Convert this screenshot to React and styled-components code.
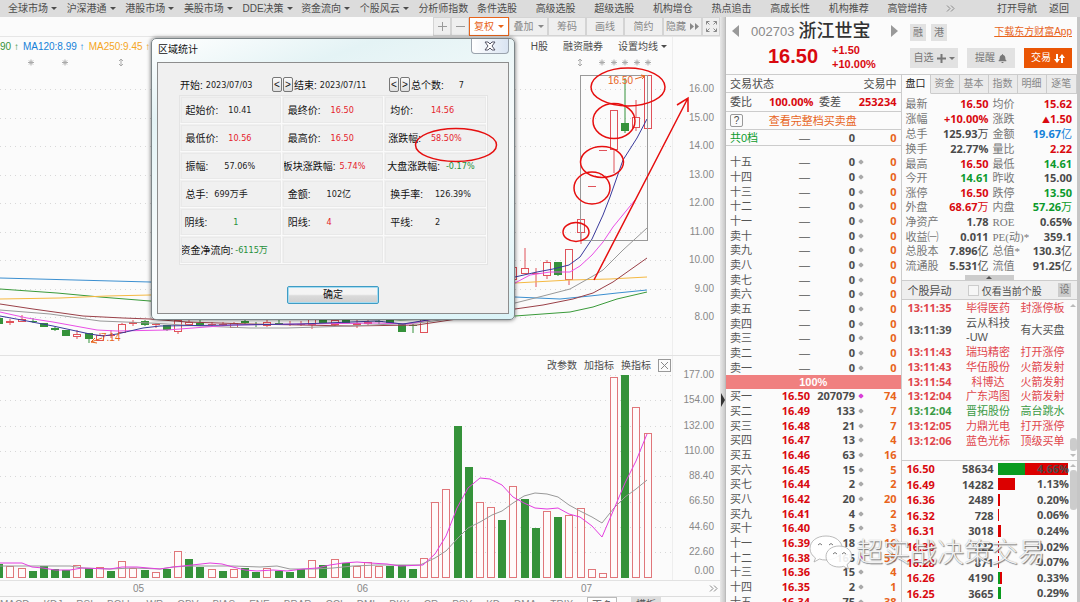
import React from "react";
import styled, { createGlobalStyle } from "styled-components";
import { FaBell } from "react-icons/fa";

const RED = "#d9090f";
const GREEN = "#0c9a2c";
const DARK = "#4a4a4a";
const ORANGE = "#e8641b";
const BLUE = "#1481d8";

const menus = [
  ["全球市场", true],
  ["沪深港通", true],
  ["港股市场", true],
  ["美股市场", true],
  ["DDE决策", true],
  ["资金流向", true],
  ["个股风云", true],
  ["分析师指数"],
  ["条件选股"],
  ["高级选股"],
  ["超级选股"],
  ["机构增仓"],
  ["热点追击"],
  ["高成长性"],
  ["机构推荐"],
  ["高管增持"],
];

// each cell of the dialog: [label, value, color, indent, gap]
const stats = [
  ["起始价:", "10.41", "#222", 6, 10],
  ["最终价:", "16.50", "#e5232c", 6, 10],
  ["均价:", "14.56", "#e5232c", 6, 18],
  ["最低价:", "10.56", "#e5232c", 6, 10],
  ["最高价:", "16.50", "#e5232c", 6, 10],
  ["涨跌幅:", "58.50%", "#e5232c", 4, 10],
  ["振幅:", "57.06%", "#222", 6, 16],
  ["板块涨跌幅:", "5.74%", "#e5232c", 1, 4],
  ["大盘涨跌幅:", "-0.17%", "#1f8f3a", 3, 6],
  ["总手:", "699万手", "#222", 6, 6],
  ["金额:", "102亿", "#222", 6, 16],
  ["换手率:", "126.39%", "#222", 6, 12],
  ["阴线:", "1", "#1f8f3a", 5, 26],
  ["阳线:", "4", "#e5232c", 6, 16],
  ["平线:", "2", "#222", 6, 22],
  ["资金净流向:", "-6115万", "#1f8f3a", 1, 2],
  ["", ""],
  ["", ""],
];

const priceTicks = [16, 15, 14, 13, 12, 11, 10, 9, 8];
const volumeTicks = [
  "177.00",
  "154.00",
  "132.00",
  "110.00",
  "88.40",
  "66.50",
  "44.60",
  "22.60",
];

const indicators =
  "MACD KDJ RSI BOLL WR OBV BIAS ENE BRAR CCI DMI DKX CR PSY KD DMA TRIX".split(
    " "
  );

const sells = [
  "十五",
  "十四",
  "十三",
  "十二",
  "十一",
  "卖十",
  "卖九",
  "卖八",
  "卖七",
  "卖六",
  "卖五",
  "卖四",
  "卖三",
  "卖二",
  "卖一",
];

const buys = [
  ["买一", "16.50", "207079", "74"],
  ["买二", "16.49", "133", "7"],
  ["买三", "16.48", "21", "7"],
  ["买四", "16.47", "13", "4"],
  ["买五", "16.46", "63", "16"],
  ["买六", "16.45", "15", "5"],
  ["买七", "16.44", "2", "2"],
  ["买八", "16.42", "20", "20"],
  ["买九", "16.41", "4", "2"],
  ["买十", "16.40", "5", "3"],
  ["十一", "16.39", "18", "16"],
  ["十二", "16.38", "165", "55"],
  ["十三", "16.36", "15", "4"],
  ["十四", "16.35", "2", "1"],
  ["十五", "16.34", "75", "38"],
];

const quotes = [
  ["最新", "16.50", RED, "均价", "15.62", RED],
  ["涨幅", "+10.00%", RED, "涨跌", "▲1.50", RED],
  ["总手", "125.93万", DARK, "金额", "19.67亿", BLUE],
  ["换手", "22.77%", DARK, "量比", "2.22", RED],
  ["最高", "16.50", RED, "最低", "14.61", GREEN],
  ["今开", "14.61", GREEN, "昨收", "15.00", DARK],
  ["涨停", "16.50", RED, "跌停", "13.50", GREEN],
  ["外盘", "68.67万", RED, "内盘", "57.26万", GREEN],
  ["净资产", "1.78", DARK, "ROE", "0.65%", DARK],
  ["收益㈠", "0.011", DARK, "PE(动)*", "359.1", DARK],
  ["总股本", "7.896亿", DARK, "总值*", "130.3亿", DARK],
  ["流通股", "5.531亿", DARK, "流值", "91.25亿", DARK],
];

const alerts = [
  ["13:11:35", "毕得医药", "封涨停板", "#e0454b"],
  ["13:11:39", "云从科技\n-UW", "有大买盘", "#555"],
  ["13:11:43", "瑞玛精密", "打开涨停", "#e0454b"],
  ["13:11:43", "华伍股份", "火箭发射", "#e0454b"],
  ["13:11:54", "科博达", "火箭发射", "#e0454b"],
  ["13:12:04", "广东鸿图", "火箭发射", "#e0454b"],
  ["13:12:04", "晋拓股份", "高台跳水", "#3a9a45"],
  ["13:12:05", "力鼎光电", "打开涨停", "#e0454b"],
  ["13:12:06", "蓝色光标", "顶级买单", "#e0454b"],
];

// [price, volume, green width, red width, percent]
const deals = [
  ["16.50", "58634", 27, 43, "4.66%"],
  ["16.49", "14282", 0, 17, "1.13%"],
  ["16.36", "2489", 0, 2, "0.20%"],
  ["16.32", "728", 0, 1, "0.06%"],
  ["16.31", "3018", 0, 3, "0.24%"],
  ["16.30", "222", 0, 1, "0.02%"],
  ["16.28", "871", 0, 1, "0.07%"],
  ["16.26", "4190", 2, 2, "0.33%"],
  ["16.25", "3665", 3, 0, "0.29%"],
];

// volume bars, one per trading day: direction and height
const volumes =
  "G14 R12 R10 G7 G12 G9 G8 R13 G10 R11 G7 R17 R10 G8 R6 G9 R27 G19 G11 R9 G7 R9 G10 G6 R10 G7 G6 G9 R18 G13 R19 G15 R12 R16 R12 G12 G13 G9 R20 R76 R89 G152 G111 R76 R71 G58 R92 G79 G50 R67 G61 R63 R70 R9 R5 R201 G203 R171 R145".split(
    " "
  );

// [day, direction, body top, body bottom, high, low]
const candles = [
  [0, "G", 318, 324, 318, 324],
  [1, "R", 321, 323, 319, 325],
  [2, "R", 319, 322, 315, 322],
  [3, "G", 321, 322, 318, 323],
  [4, "G", 323, 327, 323, 327],
  [5, "G", 328, 330, 327, 331],
  [6, "G", 330, 336, 330, 336],
  [7, "R", 334, 337, 330, 339],
  [8, "G", 333, 339, 333, 343],
  [9, "R", 335, 341, 333, 341],
  [10, "R", 335, 336, 330, 338],
  [11, "R", 324, 333, 323, 333],
  [12, "R", 322, 324, 320, 326],
  [13, "G", 321, 325, 320, 326],
  [14, "R", 324, 325, 323, 328],
  [15, "G", 325, 330, 325, 331],
  [16, "R", 320, 332, 318, 334],
  [17, "R", 322, 325, 320, 325],
  [18, "G", 323, 325, 320, 326],
  [19, "R", 324, 325, 322, 326],
  [20, "R", 324, 325, 322, 326],
  [21, "R", 323, 328, 322, 328],
  [22, "G", 321, 323, 318, 324],
  [23, "G", 324, 325, 322, 327],
  [24, "R", 322, 326, 320, 327],
  [25, "G", 323, 324, 319, 325],
  [26, "R", 324, 325, 321, 326],
  [27, "R", 324, 325, 321, 326],
  [28, "R", 319, 325, 318, 329],
  [29, "G", 318, 323, 317, 323],
  [30, "R", 320, 325, 319, 326],
  [31, "G", 317, 323, 316, 323],
  [32, "R", 323, 325, 320, 328],
  [33, "R", 322, 324, 320, 326],
  [34, "G", 321, 322, 319, 324],
  [35, "G", 318, 323, 317, 324],
  [36, "G", 324, 332, 324, 332],
  [37, "G", 325, 326, 324, 333],
  [38, "R", 318, 333, 318, 333],
  [46, "R", 267, 280, 267, 280],
  [47, "R", 268, 274, 248, 274],
  [48, "R", 273, 274, 268, 287],
  [49, "R", 262, 276, 260, 279],
  [50, "G", 262, 275, 262, 276],
  [51, "R", 249, 280, 249, 285],
  [52, "R", 219, 233, 219, 244],
  [53, "R", 186, 187, 186, 187],
  [54, "R", 150, 151, 150, 151],
  [55, "R", 110, 150, 110, 173],
  [56, "G", 123, 131, 78, 133],
  [57, "R", 117, 128, 100, 131],
  [58, "R", 75, 129, 75, 129],
];

const averages = [
  ["#3b8fd0", "0,278 150,282 515,297 560,299 590,296 617,293 647,290"],
  ["#3a9a3a", "0,289 57,293 100,297 150,301 400,320 515,316 570,312 593,307 617,299 647,292"],
  ["#f5b942", "0,299 60,298 107,296 150,295 515,283 570,280 610,279 647,277"],
  ["#9a4048", "0,304 33,309 83,316 123,318 150,319 187,322 250,324 350,326 417,325 457,319 515,309 543,305 573,299 593,293 613,282 647,258"],
  ["#999", "0,310 50,314 100,321 150,323 200,326 250,328 287,328 350,326 417,323 457,318 515,303 543,296 570,289 593,276 603,270 623,250 647,228"],
  ["#ea4fe6", "0,312 27,318 53,322 97,330 117,331 167,330 193,328 233,325 300,324 377,323 407,324 440,318 515,283 530,275 550,272 570,272 580,266 592,255 603,242 613,227 635,200"],
  ["#3a3a9c", "0,316 27,321 53,326 90,334 103,336 117,334 143,328 160,326 233,325 300,324 377,321 403,324 440,318 515,277 537,272 553,269 569,265 580,257 592,239 603,215 610,197 623,160 637,138 647,119"],
];

const magentaVolume =
  "0,562 22,562 32,566 43,567 55,569 70,569 82,567 110,568 122,566 137,566 160,568 173,566 192,564 210,562 222,563 233,566 245,569 257,570 273,569 287,570 303,568 317,567 330,564 343,562 357,561 370,562 387,563 400,565 423,564 435,553 446,535 457,507 468,487 480,477 490,478 502,484 513,496 524,502 535,507 547,508 558,507 569,513 580,516 592,525 602,536 614,508 625,482 636,460 647,433";
const grayVolume =
  "0,565 70,565 83,567 110,568 133,567 160,568 173,566 190,565 233,565 260,566 277,565 290,568 313,568 333,567 353,565 377,564 420,564 435,557 446,550 457,538 468,527 480,521 492,514 502,510 513,502 524,495 535,492 547,493 558,496 569,504 580,510 592,516 602,522 614,507 625,496 636,488 647,479";

const dayX = (i) => 647.6 - (58 - i) * 11.18;

const Candle = ({ data: [day, dir, top, bottom, high, low] }) => {
  const x = Math.round(dayX(day));
  const color = dir === "R" ? "#e0525a" : "#35923a";
  return (
    <g stroke={color} fill={dir === "R" ? "#fbfbfb" : color}>
      {high < top && <path d={`M${x} ${high}V${top}`} />}
      {low > bottom && <path d={`M${x} ${bottom}V${low}`} />}
      {bottom - top < 2 ? (
        <path d={`M${x - 4} ${top}.5h8`} />
      ) : (
        <rect x={x - 3.5} y={top + 0.5} width="7" height={bottom - top - 1} />
      )}
    </g>
  );
};

const PriceChart = () => (
  <Plot viewBox="0 56 672 299" height="299" preserveAspectRatio="xMaxYMin slice">
    {priceTicks.map((tick, i) => (
      <path
        key={tick}
        d={`M0 ${Math.round(89 + i * 28.5)}.5H672`}
        stroke="#d8d8d8"
        strokeDasharray="1 4"
      />
    ))}
    <g stroke="#aaa">
      {[31, 65, 602, 614, 625, 637, 648].map((x) => (
        <path
          key={x}
          d={`M${x - 3} 62.5h6M${x} 59.5v6M${x - 2} 60.5l4 4M${x + 2} 60.5l-4 4`}
        />
      ))}
      {[121, 580].map((x) => (
        <path
          key={x}
          d={`M${x} 59v7M${x - 2} 61l2 -2l2 2M${x - 2} 64l2 2l2 -2`}
          fill="none"
        />
      ))}
    </g>
    {candles.map((candle) => (
      <Candle key={candle[0]} data={candle} />
    ))}
    {averages.map(([color, points]) => (
      <polyline key={color} points={points} fill="none" stroke={color} />
    ))}
    <rect x="580.5" y="75.5" width="67" height="165" fill="none" stroke="#999" />
    <text x="608" y="84" fontSize="10" fill={ORANGE}>
      16.50
    </text>
    <path d="M635 79l10 -3M641 75l4 1l-3 3" stroke={ORANGE} fill="none" />
    <text x="101" y="341" fontSize="10" fill={ORANGE}>
      7.14
    </text>
    <path d="M102 338L91 342M95 338l-4 4l6 1" stroke={ORANGE} fill="none" />
  </Plot>
);

const VolumeChart = () => (
  <Plot viewBox="0 374 672 205" height="205" preserveAspectRatio="xMaxYMin slice">
    {volumeTicks.map((tick, i) => (
      <path
        key={tick}
        d={`M0 ${Math.round(374 + i * 25.3)}.5H672`}
        stroke="#d8d8d8"
        strokeDasharray="1 4"
      />
    ))}
    {volumes.map((item, i) => {
      const up = item[0] === "R";
      const height = Number(item.slice(1));
      return (
        <rect
          key={i}
          x={Math.round(dayX(i)) - 3.5}
          y={577.5 - height}
          width="7"
          height={height - 1}
          fill={up ? "#fffafa" : "#35923a"}
          stroke={up ? "#e0767a" : "#35923a"}
        />
      );
    })}
    <polyline points={grayVolume} fill="none" stroke="#999" />
    <polyline points={magentaVolume} fill="none" stroke="#e33fe0" />
  </Plot>
);

const StatsDialog = () => (
  <Dialog role="dialog" aria-label="区域统计">
    <DialogTitle>
      <span>区域统计</span>
      <CloseButton aria-label="关闭">
        <svg width="12" height="10" viewBox="0 0 12 10">
          <path
            d="M1 1h3l2 2l2 -2h3l-3 4l3 4h-3l-2 -2l-2 2h-3l3 -4z"
            fill="#fff"
            stroke="#556"
          />
        </svg>
      </CloseButton>
    </DialogTitle>
    <DialogBody>
      <RangeRow>
        <RangePart $width={114}>
          开始: <Value>2023/07/03</Value>
          <Steps>
            <StepButton>&lt;</StepButton>
            <StepButton>&gt;</StepButton>
          </Steps>
        </RangePart>
        <RangePart $width={117}>
          结束: <Value>2023/07/11</Value>
          <Steps>
            <StepButton>&lt;</StepButton>
            <StepButton>&gt;</StepButton>
          </Steps>
        </RangePart>
        <RangePart $width={54}>
          总个数: <Count>7</Count>
        </RangePart>
      </RangeRow>
      <StatGrid>
        {stats.map(([label, value, color, indent, gap], i) => (
          <StatCell key={i} $indent={indent} $gap={gap}>
            <span>{label}</span>
            <Value $color={color}>{value}</Value>
          </StatCell>
        ))}
      </StatGrid>
      <ConfirmButton>确定</ConfirmButton>
    </DialogBody>
  </Dialog>
);

const MoreArrows = ({ label }) => (
  <MoreButton aria-label={label}>
    <svg width="9" height="7" fill="none" stroke="#888">
      <path d="M1 .5l3 3l-3 3M5 .5l3 3l-3 3" />
    </svg>
  </MoreButton>
);

const ChartPanel = () => (
  <Chart>
    <ChartMain>
      <Toolbar>
        <Tool $width={18}>
          <svg width="11" height="11" stroke="#999">
            <path d="M5.5 1v9M1 5.5h9" />
          </svg>
        </Tool>
        <Tool $width={18}>
          <svg width="11" height="11" stroke="#999">
            <path d="M1 5.5h9" />
          </svg>
        </Tool>
        <Tool $width={40} $active>
          复权
          <Caret />
        </Tool>
        <Tool $width={39}>
          叠加
          <Caret />
        </Tool>
        <Tool $width={38}>筹码</Tool>
        <Tool $width={38}>画线</Tool>
        <Tool $width={39}>简约</Tool>
        <Tool $width={39}>
          隐藏
          <svg width="9" height="7" fill="#888">
            <path d="M0 0l4 3.5l-4 3.5zM5 0l4 3.5l-4 3.5z" />
          </svg>
        </Tool>
        <Tool $width={18}>
          <svg width="11" height="11" fill="none" stroke="#888">
            <path d="M.5 3.5v-3h3M.5 .5l3 3M7.5 .5h3v3M10.5 .5l-3 3M.5 7.5v3h3M.5 10.5l3 -3M10.5 7.5v3h-3M10.5 10.5l-3 -3" />
          </svg>
        </Tool>
      </Toolbar>

      <Pane>
        <PlotColumn>
          <InfoRow>
            <MaLegend $color="#35923a">90 ↑</MaLegend>
            <MaLegend $color={BLUE}>MA120:8.99 ↑</MaLegend>
            <MaLegend $color="#f5a623">MA250:9.45 ↑</MaLegend>
            <InfoLinks>
              <TextButton>H股</TextButton>
              <TextButton>融资融券</TextButton>
              <TextButton>
                设置均线
                <Caret />
              </TextButton>
            </InfoLinks>
          </InfoRow>
          <PriceChart />
        </PlotColumn>
        <PriceAxis>
          {priceTicks.map((tick) => (
            <span key={tick}>{tick.toFixed(2)}</span>
          ))}
        </PriceAxis>
      </Pane>

      <Pane>
        <PlotColumn>
          <VolumeBar>
            <TextButton>改参数</TextButton>
            <TextButton>加指标</TextButton>
            <TextButton>换指标</TextButton>
            <BoxButton aria-label="关闭指标">
              <svg width="9" height="9" stroke="#888">
                <path d="M1 1l7 7M8 1l-7 7" />
              </svg>
            </BoxButton>
          </VolumeBar>
          <VolumeChart />
        </PlotColumn>
        <VolumeAxis>
          <AxisTicks>
            {volumeTicks.map((tick) => (
              <span key={tick}>{tick}</span>
            ))}
          </AxisTicks>
          <span>0.00</span>
        </VolumeAxis>
      </Pane>

      <DateRow>
        <span>05</span>
        <span>06</span>
        <span>07</span>
        <MoreArrows label="更多日期" />
      </DateRow>

      <IndicatorRow>
        {indicators.map((name) => (
          <TextButton key={name}>{name}</TextButton>
        ))}
        <MoreSelect aria-label="更多指标">
          <option>更多</option>
        </MoreSelect>
        <TemplateButton>模板</TemplateButton>
      </IndicatorRow>

      <StatsDialog />

      <Markup width="720" height="300" viewBox="0 17 720 300">
        <ellipse cx="628" cy="87" rx="37" ry="19" />
        <ellipse cx="614" cy="121" rx="21" ry="17.5" />
        <ellipse cx="602" cy="162" rx="21.5" ry="15.5" />
        <ellipse cx="592" cy="188" rx="18" ry="16" />
        <ellipse cx="576" cy="232" rx="13" ry="9.5" />
        <ellipse cx="456" cy="145" rx="40.5" ry="16.5" />
        <path d="M594 280L688 98M677 105L688 98L688 112" />
      </Markup>
    </ChartMain>
    <Splitter aria-label="收起侧栏">
      <svg width="4" height="14" fill="#333">
        <path d="M0 0l4 7l-4 7z" />
      </svg>
    </Splitter>
  </Chart>
);

const OrderBook = () => (
  <Book>
    <BookLine $height={18}>
      <span>交易状态</span>
      <span>交易中</span>
    </BookLine>
    <RatioLine $height={19}>
      <span>委比</span>
      <Num $color={RED}>100.00%</Num>
      <span>委差</span>
      <Num $color={RED}>253234</Num>
    </RatioLine>
    <BookLine $height={18}>
      <HelpButton>?</HelpButton>
      <FullBook href="#book">查看完整档买卖盘</FullBook>
    </BookLine>
    <BookTable $height={15}>
      <tbody>
        <tr>
          <Level $color={GREEN}>共0档</Level>
          <NoPrice>—</NoPrice>
          <Volume>0</Volume>
          <Dot />
          <Orders>0</Orders>
        </tr>
      </tbody>
    </BookTable>
    <Sells>
      <BookTable $height={220}>
        <tbody>
          {sells.map((name) => (
            <tr key={name}>
              <Level>{name}</Level>
              <NoPrice>—</NoPrice>
              <Volume>0</Volume>
              <Dot>
                <Diamond />
              </Dot>
              <Orders>0</Orders>
            </tr>
          ))}
        </tbody>
      </BookTable>
    </Sells>
    <Ratio>100%</Ratio>
    <BookTable $height={220}>
      <tbody>
        {buys.map(([name, price, volume, orders], i) => (
          <tr key={name}>
            <Level>{name}</Level>
            <Price>{price}</Price>
            <Volume>{volume}</Volume>
            <Dot>
              <Diamond $color={i === 0 || i === 11 ? "#d83fd8" : undefined} />
            </Dot>
            <Orders>{orders}</Orders>
          </tr>
        ))}
      </tbody>
    </BookTable>
  </Book>
);

// units and the up mark are lighter than the digits
const Amount = ({ text }) =>
  text
    .split(/([万亿▲])/)
    .filter(Boolean)
    .map((part) =>
      part === "▲" ? (
        <Mark key={part}>{part}</Mark>
      ) : part === "万" || part === "亿" ? (
        <Unit key={part}>{part}</Unit>
      ) : (
        part
      )
    );

const Details = () => (
  <Side>
    <Tabs>
      {["盘口", "资金", "基本", "指数", "明细", "逐笔"].map((name, i) => (
        <Tab key={name} $active={i === 0}>
          {name}
        </Tab>
      ))}
    </Tabs>
    <QuoteTable>
      <tbody>
        {quotes.map(([l1, v1, c1, l2, v2, c2]) => (
          <tr key={l1}>
            <QuoteLabel>{l1}</QuoteLabel>
            <QuoteValue $color={c1} $width={54}>
              <Amount text={v1} />
            </QuoteValue>
            <QuoteLabel>{l2}</QuoteLabel>
            <QuoteValue $color={c2} $last>
              <Amount text={v2} />
            </QuoteValue>
          </tr>
        ))}
      </tbody>
    </QuoteTable>
    <Handle aria-label="展开">
      <svg width="6" height="3" fill="#555">
        <path d="M3 0l3 3h-6z" />
      </svg>
    </Handle>
    <AlertBar>
      <span>个股异动</span>
      <CheckLabel>
        <input type="checkbox" />
        仅看当前个股
      </CheckLabel>
      <SetButton>设</SetButton>
    </AlertBar>
    <AlertArea>
      <AlertTable>
        <tbody>
          {alerts.map(([time, name, action, color]) => (
            <AlertRow key={time + name} $color={color}>
              <td>{time}</td>
              <td>
                <AlertName>{name}</AlertName>
              </td>
              <td>{action}</td>
            </AlertRow>
          ))}
        </tbody>
      </AlertTable>
      <Scroll>
        <Arrow />
        <Spacer />
        <Thumb $height={13} />
        <Arrow $down />
      </Scroll>
    </AlertArea>
    <DealArea>
      <DealTable>
        <tbody>
          {deals.map(([price, volume, green, red, percent]) => (
            <tr key={price}>
              <DealPrice>{price}</DealPrice>
              <DealVolume>{volume}</DealVolume>
              <DealShare>
                <ShareBox>
                  <Bar $color="#0a9b1f" style={{ width: green }} />
                  <Bar $color="#dc0000" style={{ width: red }} />
                  <Percent>{percent}</Percent>
                </ShareBox>
              </DealShare>
            </tr>
          ))}
        </tbody>
      </DealTable>
      <Scroll>
        <Arrow />
        <Thumb $height={40} />
      </Scroll>
    </DealArea>
  </Side>
);

const App = () => {
  return (
    <>
      <GlobalStyle />
      <Page>
        <Nav>
          <Menus>
            {menus.map(([name, caret]) => (
              <MenuButton key={name}>
                {name}
                {caret && <Caret />}
              </MenuButton>
            ))}
          </Menus>
          <NavEnd>
            <MoreArrows label="更多菜单" />
            <MenuButton>打开导航</MenuButton>
            <MenuButton>返回</MenuButton>
          </NavEnd>
        </Nav>
        <Main>
          <ChartPanel />
          <QuotePanel>
            <QuoteHeader>
              <Stock>
                <StockName>
                  <Switch aria-label="上一只">
                    <svg width="7" height="12" fill="#999">
                      <path d="M7 0v12l-7 -6z" />
                    </svg>
                  </Switch>
                  <Code>002703</Code>
                  <h1>浙江世宝</h1>
                  <Switch aria-label="下一只">
                    <svg width="7" height="12" fill="#999">
                      <path d="M0 0v12l7 -6z" />
                    </svg>
                  </Switch>
                </StockName>
                <StockPrice>
                  <strong>16.50</strong>
                  <Change>
                    <span>+1.50</span>
                    <span>+10.00%</span>
                  </Change>
                </StockPrice>
              </Stock>
              <Actions>
                <ActionRow>
                  <Chip>融</Chip>
                  <Chip>港</Chip>
                  <AppLink href="#app">下载东方财富App</AppLink>
                </ActionRow>
                <ActionRow $spread>
                  <Action>
                    自选
                    <svg width="9" height="9" stroke="#777" strokeWidth="2">
                      <path d="M4.5 0v9M0 4.5h9" />
                    </svg>
                    <Caret />
                  </Action>
                  <Action>
                    提醒
                    <FaBell size={9} color="#777" />
                  </Action>
                  <Action $primary>
                    交易
                    <svg width="11" height="9" fill="#fff">
                      <path d="M2 0h2v5h2l-3 4l-3 -4h2zM7 9h2v-5h2l-3 -4l-3 4h2z" />
                    </svg>
                  </Action>
                </ActionRow>
              </Actions>
            </QuoteHeader>
            <Columns>
              <OrderBook />
              <Details />
            </Columns>
            <Watermark>
              <svg width="44" height="36" viewBox="0 0 44 36">
                <g fill="#fff" fillOpacity="0.9" stroke="#aaa" strokeWidth="0.8">
                  <path d="M17 1C8 1 1 6 1 13.5c0 4 2 7 5.5 9.5L5 27l5.5 -3c2 .8 4 1 6.5 1c9 0 16 -5 16 -12S26 1 17 1z" />
                  <path d="M30 11c-7.5 0 -13 4.5 -13 10.5S22.5 32 30 32c1.5 0 3 -.2 4.5 -.7l5 2.7l-1.5 -4.5c3 -2 4.7 -4.7 4.7 -8C42.7 15.5 37.5 11 30 11z" />
                </g>
                <g fill="none" stroke="#777">
                  <path d="M9 10q2 -3 4 0M20 10q2 -3 4 0M24 19q2 -3 4 0M33 19q2 -3 4 0" />
                </g>
              </svg>
              <span>超实战决策交易</span>
            </Watermark>
          </QuotePanel>
        </Main>
      </Page>
    </>
  );
};

export default App;

const GlobalStyle = createGlobalStyle`
  * {
    box-sizing: border-box;
  }
  body {
    margin: 0;
    background-color: #fbfbfb;
  }
  body, button, select, input {
    font-family: "Liberation Sans", "Noto Sans CJK SC", sans-serif;
    font-size: 10px;
  }
  button {
    margin: 0;
    padding: 0;
    border: none;
    background: none;
    color: inherit;
    white-space: nowrap;
    line-height: 14px;
  }
  table {
    border-collapse: collapse;
    table-layout: fixed;
    width: 100%;
  }
  td, th {
    padding: 0;
    font-weight: normal;
    text-align: left;
    white-space: nowrap;
  }
`;

const Page = styled.div`
  height: 100vh;
  display: flex;
  flex-direction: column;
  overflow: hidden;
  color: #4c4c4c;
`;

const Nav = styled.nav`
  display: flex;
  height: 17px;
  flex-shrink: 0;
  padding-left: 8px;
  background-color: #dcdcdc;
`;

const Menus = styled.div`
  flex: 1;
  display: grid;
  grid-template-columns: repeat(16, minmax(0, 1fr));
`;

const MenuButton = styled.button`
  display: flex;
  align-items: center;
  gap: 3px;
`;

const NavEnd = styled.div`
  display: flex;
  align-items: center;
  justify-content: flex-end;
  gap: 12px;
  width: 134px;
  padding-right: 11px;
`;

const MoreButton = styled.button`
  display: flex;
  margin-right: auto;
`;

const Caret = styled.i`
  border: 3px solid transparent;
  border-top-color: currentColor;
  border-bottom-width: 0;
`;

const Main = styled.main`
  flex: 1;
  display: flex;
  min-height: 0;
`;

const Chart = styled.section`
  flex: 1;
  display: flex;
  min-width: 0;
`;

const ChartMain = styled.div`
  position: relative;
  flex: 1;
  min-width: 0;
`;

const Splitter = styled.button`
  width: 6px;
  padding-bottom: 0;
  padding-top: 184px;
  background: linear-gradient(90deg, #e9e9e9, #c9c9c9);
  border-right: 1px solid #bbb;
`;

const Toolbar = styled.div`
  display: flex;
  justify-content: flex-end;
  height: 20px;
  border-bottom: 1px solid #e6e6e6;
`;

const Tool = styled.button`
  display: flex;
  align-items: center;
  justify-content: center;
  gap: 4px;
  width: ${({ $width }) => $width}px;
  border: 1px solid ${({ $active }) => ($active ? ORANGE : "#d4d4d4")};
  background-color: ${({ $active }) => ($active ? "#fff" : "#efefef")};
  color: ${({ $active }) => ($active ? ORANGE : "#888")};
`;

const Pane = styled.div`
  display: flex;
  border-bottom: 1px solid #e2e2e2;
`;

const PlotColumn = styled.div`
  flex: 1;
  min-width: 0;
`;

const Plot = styled.svg`
  display: block;
  width: 100%;
`;

const InfoRow = styled.div`
  display: flex;
  align-items: center;
  gap: 4px;
  height: 19px;
`;

const MaLegend = styled.span`
  color: ${({ $color }) => $color};
  white-space: nowrap;
`;

const InfoLinks = styled.div`
  display: flex;
  gap: 15px;
  margin-left: auto;
  padding-right: 5px;
`;

const TextButton = styled.button`
  display: flex;
  align-items: center;
  gap: 3px;
`;

const PriceAxis = styled.div`
  display: flex;
  flex-direction: column;
  justify-content: space-between;
  width: 48px;
  padding: 46px 6px 32px 0;
  border-left: 1px solid #eee;
  text-align: right;
  line-height: 12px;
  color: #888;
`;

const VolumeBar = styled.div`
  display: flex;
  align-items: center;
  justify-content: flex-end;
  gap: 7px;
  height: 19px;
  padding-right: 1px;
`;

const BoxButton = styled.button`
  display: grid;
  place-items: center;
  width: 13px;
  height: 13px;
  border: 1px solid #999;
`;

const VolumeAxis = styled(PriceAxis)`
  justify-content: flex-start;
  gap: 7px;
  padding: 13px 6px 0 0;
`;

const AxisTicks = styled.div`
  display: flex;
  flex-direction: column;
  justify-content: space-between;
  height: 189px;
`;

const DateRow = styled.div`
  display: grid;
  grid-template-columns: 224px 224px 1fr auto;
  align-items: center;
  height: 16px;
  padding-left: 133px;
  padding-right: 2px;
  border-bottom: 1px solid #ddd;
  color: #888;
`;

const IndicatorRow = styled.div`
  display: flex;
  gap: 14px;
  color: #888;
`;

const MoreSelect = styled.select`
  width: 30px;
  height: 16px;
  padding: 0 4px;
  border: 1px solid #bbb;
  background-color: #fff;
  color: #555;
  appearance: none;
`;

const TemplateButton = styled.button`
  width: 30px;
  background-color: #ddd;
  color: #555;
`;

const Markup = styled.svg`
  position: absolute;
  top: 0;
  right: 0;
  fill: none;
  stroke: #e60f0f;
  stroke-width: 1.5;
  pointer-events: none;
`;

const Dialog = styled.div`
  position: absolute;
  top: 21px;
  right: 205px;
  width: 364px;
  padding: 0 5px 5px;
  border: 1px solid #7c8588;
  border-radius: 5px;
  background: linear-gradient(160deg, #fff, #e4f3f5 20%, #fbfdfd 60%, #d9f3f7);
  box-shadow: 0 0 4px rgba(0, 0, 0, 0.6);
  color: #111;
`;

const DialogTitle = styled.div`
  display: flex;
  justify-content: space-between;
  height: 23px;
  padding-left: 1px;
  line-height: 21px;
`;

const CloseButton = styled.button`
  display: grid;
  place-items: center;
  width: 38px;
  height: 15px;
  border: 1px solid #9aa3ad;
  border-top: none;
  border-radius: 0 0 4px 4px;
  background: linear-gradient(90deg, #fff, #d9e4f2);
`;

const DialogBody = styled.div`
  display: flex;
  flex-direction: column;
  align-items: center;
  height: 252px;
  padding: 11px 20px 9px;
  border: 1px solid #8d8d8d;
  background-color: #f0f0f0;
`;

const RangeRow = styled.div`
  display: flex;
  width: 308px;
  height: 21px;
`;

const RangePart = styled.div`
  display: flex;
  align-items: center;
  gap: 3px;
  width: ${({ $width }) => $width}px;
  padding-left: 1px;
  white-space: nowrap;
`;

const Value = styled.span`
  font-family: "DejaVu Sans Condensed", "Open Sans", "Noto Sans CJK SC", sans-serif;
  font-size: 9px;
  color: ${({ $color }) => $color || "#222"};
`;

const Count = styled(Value)`
  margin-left: auto;
`;

const Steps = styled.span`
  display: flex;
  gap: 1px;
  margin-left: auto;
`;

const StepButton = styled.button`
  width: 10px;
  height: 15px;
  border: 1px solid #777;
  border-radius: 2px;
  background: linear-gradient(#fafafa, #dedede);
  line-height: 12px;
`;

const StatGrid = styled.div`
  display: grid;
  grid-template-columns: repeat(3, 1fr);
  grid-auto-rows: 28px;
  width: 309px;
  border: 1px solid #e4e4e4;
`;

const StatCell = styled.div`
  display: flex;
  align-items: center;
  gap: ${({ $gap }) => $gap || 0}px;
  padding-left: ${({ $indent }) => $indent || 0}px;
  border-right: 1px solid #fafafa;
  border-bottom: 1px solid #fafafa;
  outline: 1px solid #e9e9e9;
  outline-offset: -2px;
  white-space: nowrap;
`;

const ConfirmButton = styled.button`
  width: 92px;
  height: 18px;
  margin-top: auto;
  border: 1px solid #3f9cc4;
  border-radius: 2px;
  background: linear-gradient(#f4f4f4 45%, #dadada 55%, #cfcfcf);
  box-shadow: inset 0 0 0 1px #a5dcf2;
`;

const QuotePanel = styled.aside`
  position: relative;
  display: flex;
  flex-direction: column;
  width: 354px;
  border-right: 3px solid #c6c6c6;
`;

const QuoteHeader = styled.header`
  display: flex;
  height: 58px;
  flex-shrink: 0;
  border-bottom: 1px solid #ccc;
`;

const Stock = styled.div`
  width: 184px;
  padding: 4px 12px 0 6px;
`;

const StockName = styled.div`
  display: flex;
  align-items: center;
  height: 20px;

  h1 {
    margin: 0 auto 0 4px;
    font-size: 18px;
    font-weight: 500;
    line-height: 20px;
    color: #333;
  }
`;

const Switch = styled.button`
  display: flex;
`;

const Code = styled.span`
  margin-left: 12px;
  font-size: 13px;
  color: #888;
`;

const StockPrice = styled.div`
  display: flex;
  align-items: center;
  gap: 14px;
  height: 31px;
  padding-left: 36px;
  color: ${RED};

  strong {
    font-size: 20px;
  }
`;

const Change = styled.div`
  display: flex;
  flex-direction: column;
  font-size: 11px;
  font-weight: bold;
  line-height: 14px;
`;

const Actions = styled.div`
  flex: 1;
  display: flex;
  flex-direction: column;
  gap: 7px;
  padding: 7px 5px 0 0;
`;

const ActionRow = styled.div`
  display: flex;
  gap: 5px;
  justify-content: ${({ $spread }) => ($spread ? "space-between" : "flex-start")};
`;

const Chip = styled.button`
  width: 16px;
  height: 17px;
  background-color: #e2e2e2;
  color: #777;
`;

const AppLink = styled.a`
  margin-left: auto;
  color: ${ORANGE};
  line-height: 15px;
`;

const Action = styled.button`
  display: flex;
  align-items: center;
  justify-content: center;
  gap: 3px;
  width: 48px;
  height: 20px;
  background-color: ${({ $primary }) => ($primary ? "#ea5504" : "#e2e2e2")};
  color: ${({ $primary }) => ($primary ? "#fff" : "#777")};
`;

const Columns = styled.div`
  flex: 1;
  display: grid;
  grid-template-columns: 1fr 1fr;
  min-height: 0;
`;

const Book = styled.div`
  border-right: 1px solid #ccc;
  font-size: 11px;
`;

const BookLine = styled.div`
  display: flex;
  align-items: center;
  justify-content: space-between;
  height: ${({ $height }) => $height}px;
  padding: 0 4px;
  border-bottom: 1px solid #ccc;
  line-height: 14px;
`;

const RatioLine = styled(BookLine)`
  display: grid;
  grid-template-columns: 39px 50px 1fr auto;
`;

const Num = styled.span`
  font-family: "Open Sans", "Noto Sans CJK SC", sans-serif;
  font-weight: bold;
  color: ${({ $color }) => $color};
`;

const HelpButton = styled.button`
  width: 13px;
  height: 13px;
  border: 1px solid #999;
  border-radius: 2px;
  line-height: 11px;
`;

const FullBook = styled.a`
  margin: 0 auto;
  padding-right: 14px;
  color: ${ORANGE};
  text-decoration: none;
`;

const Sells = styled.div`
  padding-top: 9px;
  border-top: 1px solid #ccc;
`;

const BookTable = styled.table`
  height: ${({ $height }) => $height}px;
  line-height: 14px;
`;

const Level = styled.th`
  width: 34px;
  padding-left: 4px;
  color: ${({ $color }) => $color || "#555"};
`;

const NumCell = styled.td`
  font-family: "Open Sans", "Noto Sans CJK SC", sans-serif;
  font-weight: bold;
  text-align: right;
`;

const Price = styled(NumCell)`
  width: 50px;
  color: ${RED};
`;

const NoPrice = styled.td`
  width: 50px;
  color: #555;
  text-align: right;
`;

const Volume = styled(NumCell)`
  width: 45px;
`;

const Dot = styled.td`
  width: 12px;
`;

const Diamond = styled.i`
  display: block;
  width: 4px;
  height: 4px;
  margin: 0 auto;
  border-radius: 1px;
  background-color: ${({ $color }) => $color || "#aaa"};
  transform: rotate(45deg);
`;

const Orders = styled(NumCell)`
  padding-right: 4px;
  color: ${ORANGE};
`;

const Ratio = styled.div`
  height: 14px;
  background-color: #f08080;
  color: #fff;
  font-weight: bold;
  line-height: 14px;
  text-align: center;
`;

const Side = styled.div`
  display: flex;
  flex-direction: column;
  min-width: 0;
`;

const Tabs = styled.div`
  display: grid;
  grid-template-columns: repeat(5, 29px) 1fr;
  height: 19px;
  flex-shrink: 0;
`;

const Tab = styled.button`
  border-right: 1px solid #ccc;
  border-bottom: 1px solid ${({ $active }) => ($active ? "transparent" : "#ccc")};
  background-color: ${({ $active }) => ($active ? "transparent" : "#ebebeb")};
  color: ${({ $active }) => ($active ? "#222" : "#888")};
`;

const QuoteTable = styled.table`
  height: 176px;
  margin-top: 3px;
  line-height: 14px;
`;

const QuoteLabel = styled.th`
  width: 33px;
  padding-left: 4px;
  font-family: "Liberation Serif", "Noto Sans CJK SC", sans-serif;
  font-size: 11px;
  color: #777;
`;

const QuoteValue = styled(NumCell)`
  width: ${({ $width }) => ($width ? `${$width}px` : "auto")};
  padding-right: ${({ $last }) => ($last ? 5 : 0)}px;
  font-size: 11px;
  color: ${({ $color }) => $color};
`;

const Unit = styled.span`
  font-weight: normal;
`;

const Mark = styled.span`
  font-size: 8px;
`;

const Handle = styled.button`
  display: grid;
  place-items: center;
  width: 49px;
  height: 5px;
  margin: 2px auto 0;
  flex-shrink: 0;
  background-color: #ccc;
`;

const AlertBar = styled.div`
  display: flex;
  align-items: center;
  justify-content: space-between;
  height: 20px;
  flex-shrink: 0;
  padding: 0 6px;
  border: 1px solid #ccc;
  border-width: 1px 0;
  background-color: #eee;
  font-size: 11px;
`;

const CheckLabel = styled.label`
  display: flex;
  align-items: center;
  gap: 3px;
  font-size: 10px;

  input {
    appearance: none;
    width: 11px;
    height: 11px;
    margin: 0;
    border: 1px solid #ccc;
    background-color: #f6f6f6;
  }
`;

const SetButton = styled.button`
  width: 13px;
  background-color: #ccc;
  color: #777;
`;

const AlertArea = styled.div`
  display: flex;
  align-items: flex-start;
  height: 161px;
  flex-shrink: 0;
  padding-top: 1px;
  border-bottom: 1px solid #ccc;
`;

const AlertTable = styled.table`
  height: 147px;
  line-height: 14px;
  font-size: 11px;
`;

const AlertRow = styled.tr`
  color: ${({ $color }) => $color};

  td:first-child {
    width: 58px;
    padding-left: 6px;
    font-family: "Open Sans", sans-serif;
    font-weight: bold;
  }
  td:nth-child(2) {
    width: 57px;
    text-align: center;
  }
  td:last-child {
    padding-left: 4px;
  }
`;

const AlertName = styled.span`
  display: inline-block;
  vertical-align: top;
  text-align: left;
  white-space: pre-line;
`;

const Scroll = styled.div`
  display: flex;
  flex-direction: column;
  align-items: center;
  gap: 3px;
  width: 8px;
  flex-shrink: 0;
  align-self: stretch;
  padding: 3px 0;
`;

const Arrow = styled.i`
  border: 3px solid transparent;
  border-${({ $down }) => ($down ? "top" : "bottom")}-color: #bbb;
  border-${({ $down }) => ($down ? "bottom" : "top")}-width: 0;
`;

const Spacer = styled.span`
  flex: 1;
`;

const Thumb = styled.span`
  width: 7px;
  height: ${({ $height }) => $height}px;
  border-radius: 3px;
  background-color: #ccc;
`;

const DealArea = styled.div`
  display: flex;
  align-items: flex-start;
`;

const DealTable = styled.table`
  height: 140px;
  font-size: 11px;
  line-height: 15px;
`;

const DealPrice = styled(NumCell)`
  width: 38px;
  padding-left: 5px;
  text-align: left;
  color: ${RED};
`;

const DealVolume = styled(NumCell)`
  width: 54px;
`;

const DealShare = styled(NumCell)`
  padding-left: 4px;
`;

const ShareBox = styled.div`
  display: flex;
  position: relative;
  height: 12px;
`;

const Bar = styled.span`
  height: 12px;
  background-color: ${({ $color }) => $color};
`;

const Percent = styled.span`
  position: absolute;
  right: 0;
  line-height: 12px;
`;

const Watermark = styled.div`
  position: absolute;
  top: 518px;
  right: 32px;
  display: flex;
  align-items: center;
  gap: 3px;
  font-size: 27px;
  font-weight: 300;
  line-height: 36px;
  color: rgba(255, 255, 255, 0.9);
  text-shadow: 1px 1px 1px #777, 0 0 1px #999;
  white-space: nowrap;
  pointer-events: none;
`;
